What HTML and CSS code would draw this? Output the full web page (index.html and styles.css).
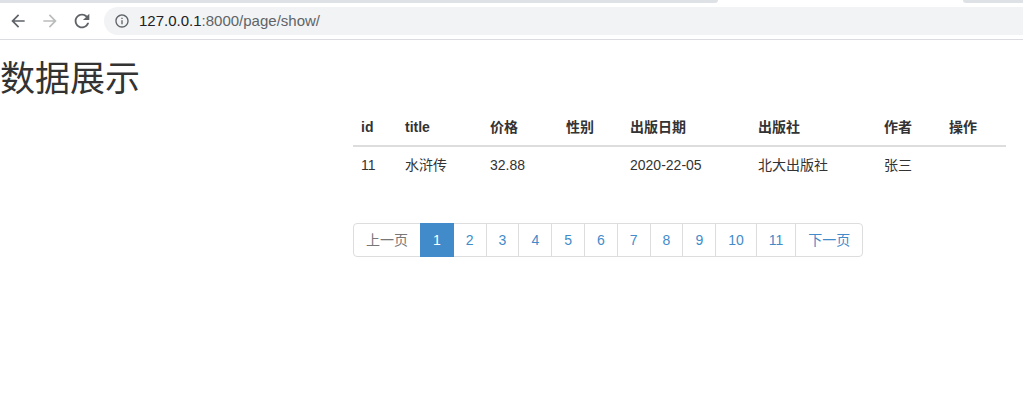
FILE: index.html
```html
<!DOCTYPE html>
<html lang="zh-CN">
<head>
<meta charset="utf-8">
<title>数据展示</title>
<link rel="stylesheet" href="styles.css">
</head>
<body>
<div class="chrome">
  <div class="tabstrip">
    <div class="tab-rest left"></div>
    <div class="tab-active"></div>
    <div class="tab-rest right"></div>
  </div>
  <div class="toolbar">
    <div class="nav-btn">
      <svg width="20" height="20" viewBox="0 0 24 24"><path fill="#5f6368" d="M20 11H7.83l5.59-5.59L12 4l-8 8 8 8 1.41-1.41L7.83 13H20v-2z"/></svg>
    </div>
    <div class="nav-btn">
      <svg width="20" height="20" viewBox="0 0 24 24"><path fill="#babcbe" d="M4 11h12.17l-5.59-5.59L12 4l8 8-8 8-1.41-1.41L16.17 13H4v-2z"/></svg>
    </div>
    <div class="nav-btn">
      <svg width="22" height="22" viewBox="0 0 24 24"><path fill="#5f6368" d="M17.65 6.35A7.958 7.958 0 0 0 12 4c-4.42 0-7.99 3.58-7.99 8s3.57 8 7.99 8c3.73 0 6.84-2.55 7.73-6h-2.08A5.99 5.99 0 0 1 12 18c-3.31 0-6-2.69-6-6s2.69-6 6-6c1.66 0 3.14.69 4.22 1.78L13 11h7V4l-2.35 2.35z"/></svg>
    </div>
    <div class="omnibox">
      <svg class="info" width="16" height="16" viewBox="0 0 24 24"><path fill="#5f6368" d="M11 7h2v2h-2zm0 4h2v6h-2zm1-9C6.48 2 2 6.48 2 12s4.48 10 10 10 10-4.48 10-10S17.52 2 12 2zm0 18c-4.41 0-8-3.59-8-8s3.59-8 8-8 8 3.59 8 8-3.59 8-8 8z"/></svg>
      <span class="url"><span class="host">127.0.0.1</span><span class="path">:8000/page/show/</span></span>
    </div>
  </div>
</div>

<div class="page">
  <h1 class="title">数据展示</h1>
  <div class="content">
    <table class="table">
      <thead>
        <tr>
          <th class="c-id">id</th>
          <th class="c-title">title</th>
          <th class="c-price">价格</th>
          <th class="c-sex">性别</th>
          <th class="c-date">出版日期</th>
          <th class="c-pub">出版社</th>
          <th class="c-author">作者</th>
          <th class="c-op">操作</th>
        </tr>
      </thead>
      <tbody>
        <tr>
          <td>11</td>
          <td>水浒传</td>
          <td>32.88</td>
          <td></td>
          <td>2020-22-05</td>
          <td>北大出版社</td>
          <td>张三</td>
          <td></td>
        </tr>
      </tbody>
    </table>
    <ul class="pagination">
      <li class="disabled"><a>上一页</a></li>
      <li class="active"><a>1</a></li>
      <li><a>2</a></li>
      <li><a>3</a></li>
      <li><a>4</a></li>
      <li><a>5</a></li>
      <li><a>6</a></li>
      <li><a>7</a></li>
      <li><a>8</a></li>
      <li><a>9</a></li>
      <li><a>10</a></li>
      <li><a>11</a></li>
      <li><a>下一页</a></li>
    </ul>
  </div>
</div>
</body>
</html>
```

FILE: styles.css
```css
html, body {
  margin: 0;
  padding: 0;
  background: #fff;
}
body {
  font-family: "Liberation Sans", "Noto Sans CJK SC", sans-serif;
  font-size: 14px;
  line-height: 20px;
  color: #333;
}

/* browser chrome */
.chrome {
  background: #fff;
}
.tabstrip {
  display: flex;
  height: 3px;
}
.tab-rest {
  background: #dee1e6;
}
.tab-rest.left {
  width: 718px;
  border-bottom-right-radius: 3px;
}
.tab-active {
  width: 245px;
  background: #fff;
}
.tab-rest.right {
  flex: 1;
  border-bottom-left-radius: 3px;
}
.toolbar {
  display: flex;
  align-items: center;
  height: 36px;
  padding-left: 2px;
  border-bottom: 1px solid #dadce0;
}
.nav-btn {
  width: 32px;
  height: 28px;
  display: flex;
  align-items: center;
  justify-content: center;
}
.omnibox {
  margin-left: 6px;
  flex: 1;
  height: 28px;
  background: #f1f3f4;
  border-radius: 14px 0 0 14px;
  display: flex;
  align-items: center;
  padding-left: 10px;
}
.info {
  margin-right: 9px;
}
.url {
  font-family: "Liberation Sans", sans-serif;
  font-size: 15px;
}
.host {
  color: #202124;
}
.path {
  color: #5f6368;
}

/* page */
.title {
  margin: 19px 0 10px 0;
  font-family: "Liberation Sans", "Noto Sans CJK SC", sans-serif;
  font-size: 35px;
  font-weight: 400;
  line-height: 39.6px;
  color: #333;
}
.content {
  margin-left: 353px;
  width: 653px;
}
.table {
  width: 653px;
  border-collapse: collapse;
  border-spacing: 0;
  table-layout: fixed;
}
.table th,
.table td {
  box-sizing: border-box;
  padding: 8px;
  text-align: left;
  vertical-align: top;
  line-height: 20px;
}
.table th {
  font-weight: 700;
  border-bottom: 2px solid #ddd;
}
.table td {
  border-top: 1px solid #ddd;
}
.c-id { width: 44px; }
.c-title { width: 85px; }
.c-price { width: 76px; }
.c-sex { width: 64px; }
.c-date { width: 128px; }
.c-pub { width: 126px; }
.c-author { width: 65px; }
.c-op { width: 65px; }

.pagination {
  display: flex;
  list-style: none;
  margin: 40px 0 0 0;
  padding: 0;
}
.pagination li a {
  display: block;
  padding: 6px 12px;
  line-height: 20px;
  color: #428bca;
  background: #fff;
  border: 1px solid #ddd;
  margin-left: -1px;
  text-decoration: none;
}
.pagination li:first-child a {
  margin-left: 0;
  border-radius: 4px 0 0 4px;
}
.pagination li:last-child a {
  border-radius: 0 4px 4px 0;
}
.pagination li.disabled a {
  color: #777;
}
.pagination li.active a {
  color: #fff;
  background: #428bca;
  border-color: #428bca;
  position: relative;
  z-index: 2;
}
```
